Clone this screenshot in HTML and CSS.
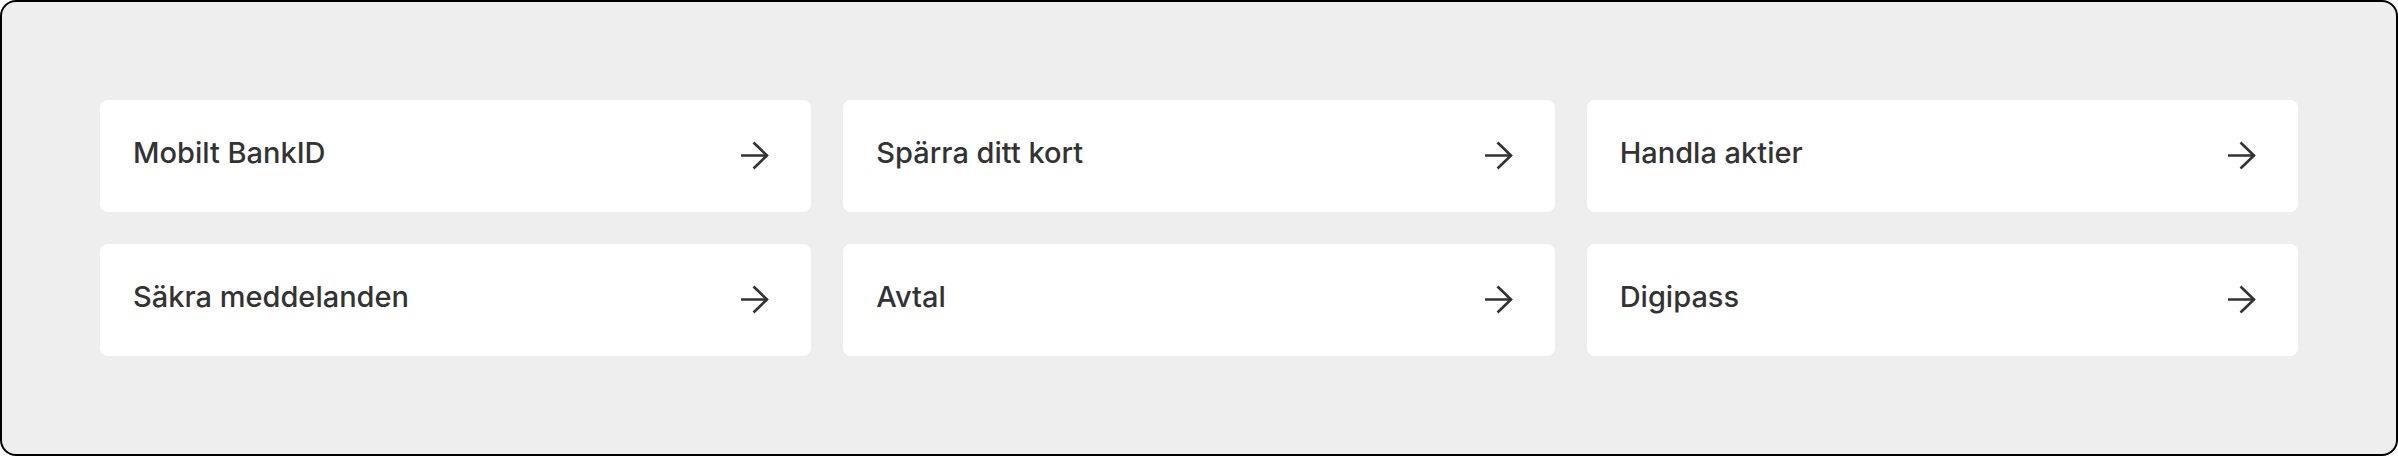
FILE: index.html
```html
<!DOCTYPE html>
<html lang="sv">
<head>
<meta charset="utf-8">
<title>Genvägar</title>
<link rel="stylesheet" href="styles.css">
</head>
<body>
<main class="frame">
  <nav class="links">
    <a class="card" href="#"><span class="label">Mobilt BankID</span><svg class="arrow" viewBox="0 0 32 32" aria-hidden="true"><path d="M2 15.5h27M14.5 2.5l13.5 13-13.5 13"/></svg></a>
    <a class="card" href="#"><span class="label">Spärra ditt kort</span><svg class="arrow" viewBox="0 0 32 32" aria-hidden="true"><path d="M2 15.5h27M14.5 2.5l13.5 13-13.5 13"/></svg></a>
    <a class="card" href="#"><span class="label">Handla aktier</span><svg class="arrow" viewBox="0 0 32 32" aria-hidden="true"><path d="M2 15.5h27M14.5 2.5l13.5 13-13.5 13"/></svg></a>
    <a class="card" href="#"><span class="label">Säkra meddelanden</span><svg class="arrow" viewBox="0 0 32 32" aria-hidden="true"><path d="M2 15.5h27M14.5 2.5l13.5 13-13.5 13"/></svg></a>
    <a class="card" href="#"><span class="label">Avtal</span><svg class="arrow" viewBox="0 0 32 32" aria-hidden="true"><path d="M2 15.5h27M14.5 2.5l13.5 13-13.5 13"/></svg></a>
    <a class="card" href="#"><span class="label">Digipass</span><svg class="arrow" viewBox="0 0 32 32" aria-hidden="true"><path d="M2 15.5h27M14.5 2.5l13.5 13-13.5 13"/></svg></a>
  </nav>
</main>
</body>
</html>
```
FILE: styles.css
```css
* { box-sizing: border-box; }
html, body { margin: 0; padding: 0; background: #fff; }
.frame {
  width: 2398px;
  height: 456px;
  border: 2px solid #000;
  border-radius: 16px;
  background: #eeeeee;
  padding: 98px;
}
.links {
  display: grid;
  grid-template-columns: repeat(3, 1fr);
  grid-auto-rows: 112px;
  gap: 32px;
}
.card {
  display: flex;
  align-items: center;
  justify-content: space-between;
  background: #fff;
  border-radius: 8px;
  padding: 0 40px 0 33px;
  text-decoration: none;
  color: #333;
}
.label {
  font-family: Inter, "Noto Sans", sans-serif;
  font-size: 29px;
  line-height: 36px;
  font-weight: 500;
  letter-spacing: 0;
  margin-top: -6px;
}
.arrow {
  width: 32px;
  height: 32px;
  flex: none;
  fill: none;
  stroke: #333;
  stroke-width: 2.6;
}
```
